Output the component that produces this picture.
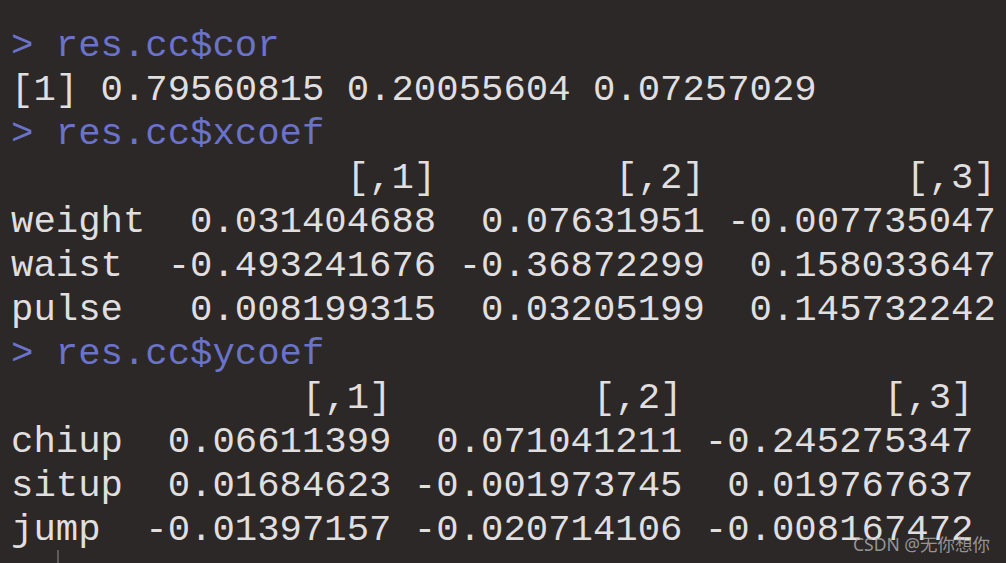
const LINES: { text: string; prompt?: boolean }[] = [
  { text: "> res.cc$cor", prompt: true },
  { text: "[1] 0.79560815 0.20055604 0.07257029" },
  { text: "> res.cc$xcoef", prompt: true },
  { text: "               [,1]        [,2]         [,3]" },
  { text: "weight  0.031404688  0.07631951 -0.007735047" },
  { text: "waist  -0.493241676 -0.36872299  0.158033647" },
  { text: "pulse   0.008199315  0.03205199  0.145732242" },
  { text: "> res.cc$ycoef", prompt: true },
  { text: "             [,1]         [,2]         [,3]" },
  { text: "chiup  0.06611399  0.071041211 -0.245275347" },
  { text: "situp  0.01684623 -0.001973745  0.019767637" },
  { text: "jump  -0.01397157 -0.020714106 -0.008167472" },
];

export default function App() {
  return (
    <div className="relative h-[563px] w-[1006px] overflow-hidden bg-[#2b2827]">
      <div className="pl-[11px] pt-[24px] font-['Liberation_Mono',monospace] text-[37.3px] leading-[44px]">
        {LINES.map((l, i) => (
          <div
            key={i}
            className={[
              "whitespace-pre",
              l.prompt ? "text-[#6b73c9]" : "text-[#e0dede]",
            ].join(" ")}
          >
            {l.text}
          </div>
        ))}
      </div>

      {/* console cursor */}
      <div className="absolute left-[57px] top-[550px] h-[13px] w-[2px] bg-[#5c5a5a]" />

      {/* watermark */}
      <div className="absolute left-[853px] top-[532px] whitespace-nowrap font-['Noto_Sans','Noto_Sans_CJK_SC',sans-serif] text-[17.5px] leading-[24px] text-[#b4b2b2]/80">
        CSDN @无你想你
      </div>
    </div>
  );
}
